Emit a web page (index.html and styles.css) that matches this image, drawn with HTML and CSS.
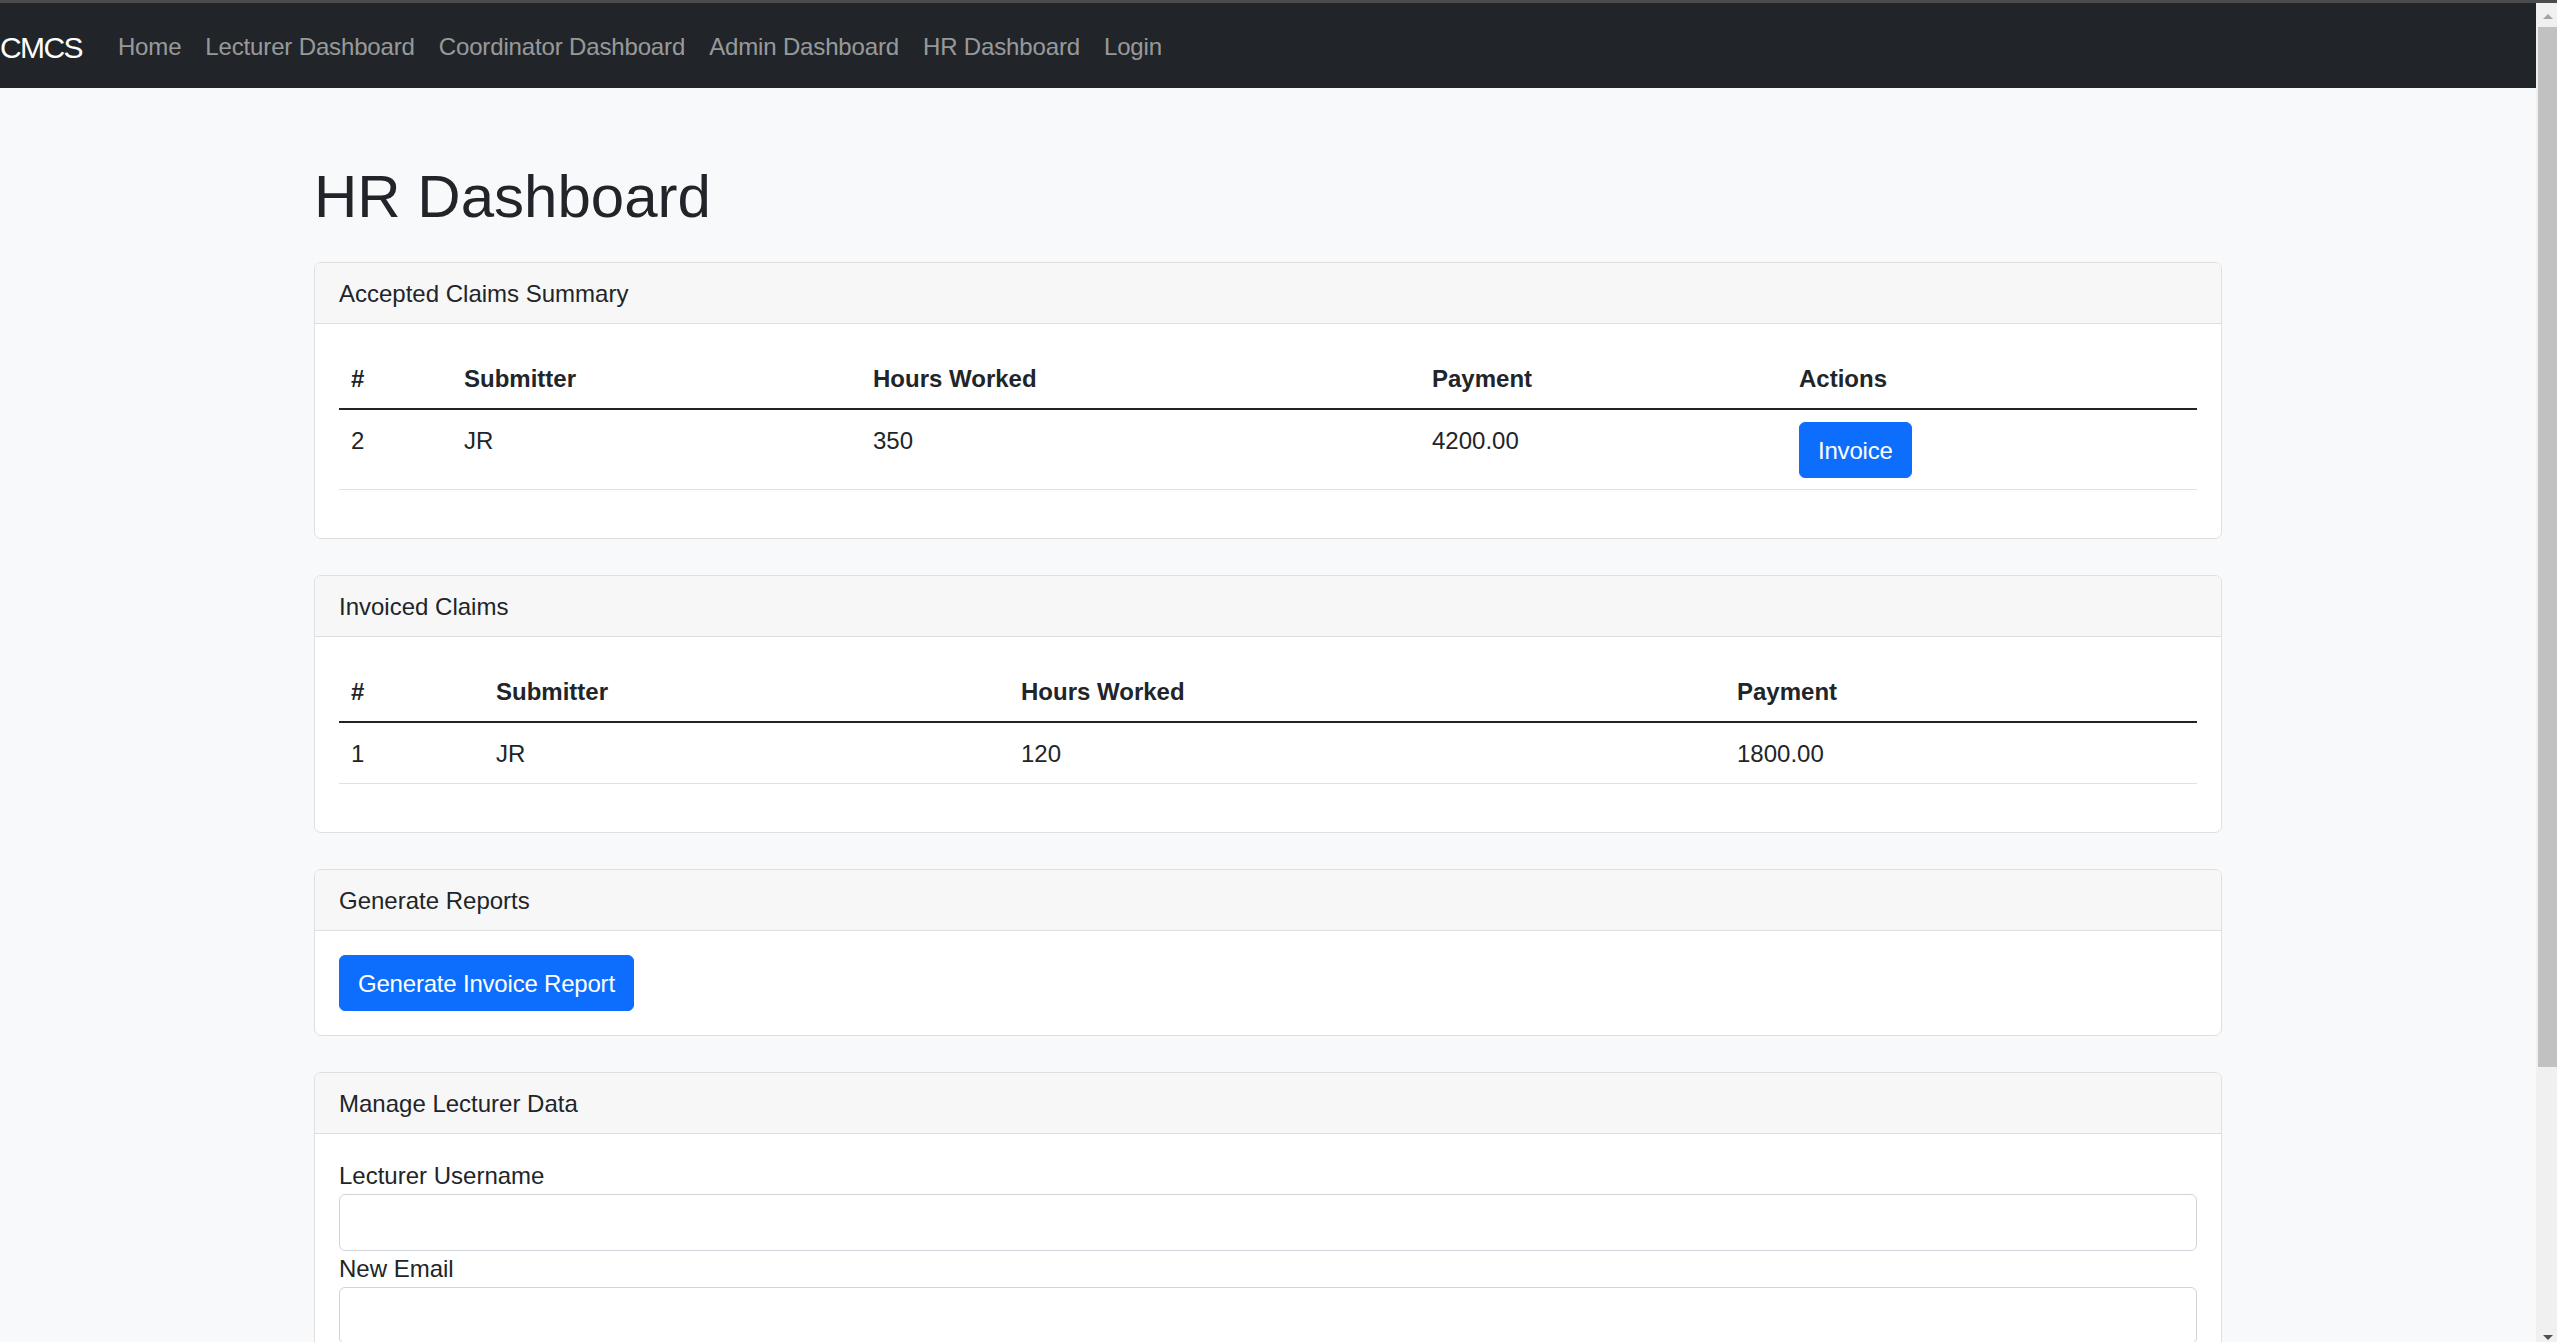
FILE: index.html
```html
<!DOCTYPE html>
<html lang="en">
<head>
<meta charset="utf-8">
<title>HR Dashboard - CMCS</title>
<link rel="stylesheet" href="styles.css">
</head>
<body>
<div class="topline"></div>
<div class="viewport">
  <div class="page">
    <nav class="navbar">
      <a class="brand" href="#">CMCS</a>
      <ul class="nav">
        <li><a class="nav-link" href="#">Home</a></li>
        <li><a class="nav-link" href="#">Lecturer Dashboard</a></li>
        <li><a class="nav-link" href="#">Coordinator Dashboard</a></li>
        <li><a class="nav-link" href="#">Admin Dashboard</a></li>
        <li><a class="nav-link" href="#">HR Dashboard</a></li>
        <li><a class="nav-link" href="#">Login</a></li>
      </ul>
    </nav>
    <main class="container">
      <h1 class="title">HR Dashboard</h1>

      <section class="card">
        <div class="card-header">Accepted Claims Summary</div>
        <div class="card-body">
          <table class="table t-accepted">
            <thead>
              <tr><th class="c1">#</th><th class="c2">Submitter</th><th class="c3">Hours Worked</th><th class="c4">Payment</th><th class="c5">Actions</th></tr>
            </thead>
            <tbody>
              <tr><td>2</td><td>JR</td><td>350</td><td>4200.00</td><td class="cell-btn"><button class="btn">Invoice</button></td></tr>
            </tbody>
          </table>
        </div>
      </section>

      <section class="card">
        <div class="card-header">Invoiced Claims</div>
        <div class="card-body">
          <table class="table t-invoiced">
            <thead>
              <tr><th class="c1">#</th><th class="c2">Submitter</th><th class="c3">Hours Worked</th><th class="c4">Payment</th></tr>
            </thead>
            <tbody>
              <tr><td>1</td><td>JR</td><td>120</td><td>1800.00</td></tr>
            </tbody>
          </table>
        </div>
      </section>

      <section class="card">
        <div class="card-header">Generate Reports</div>
        <div class="card-body">
          <button class="btn">Generate Invoice Report</button>
        </div>
      </section>

      <section class="card">
        <div class="card-header">Manage Lecturer Data</div>
        <div class="card-body">
          <form class="form">
            <label class="form-label" for="lu">Lecturer Username</label>
            <input class="form-control" id="lu" type="text">
            <label class="form-label" for="ne">New Email</label>
            <input class="form-control" id="ne" type="email">
          </form>
        </div>
      </section>
    </main>
  </div>
  <div class="scrollbar">
    <div class="sb-up"></div>
    <div class="sb-thumb"></div>
    <div class="sb-space"></div>
    <div class="sb-down"></div>
  </div>
</div>
</body>
</html>
```

FILE: styles.css
```css
* { box-sizing: border-box; }

html, body {
  margin: 0;
  height: 1342px;
  overflow: hidden;
}

body {
  display: flex;
  flex-direction: column;
  font-family: "Liberation Sans", Arial, sans-serif;
  font-size: 24px;
  line-height: 36px;
  color: #212529;
  background: #f8f9fa;
}

.topline {
  height: 3px;
  background: #4b4b4b;
  flex: none;
}

.viewport {
  flex: 1;
  display: flex;
  min-height: 0;
}

.page {
  flex: 1;
  min-width: 0;
  overflow: hidden;
  background: #f8f9fa;
}

/* navbar */
.navbar {
  display: flex;
  align-items: center;
  height: 85px;
  padding: 3px 0 0;
  background: #212529;
}

.brand {
  font-size: 30px;
  line-height: 45px;
  padding: 7px 0;
  margin-right: 24px;
  letter-spacing: -1.6px;
  color: #fff;
  text-decoration: none;
}

.nav {
  display: flex;
  list-style: none;
  margin: 0;
  padding: 0;
}

.nav-link {
  display: block;
  padding: 12px;
  letter-spacing: -0.15px;
  color: rgba(255, 255, 255, 0.55);
  text-decoration: none;
}

/* main */
.container {
  width: 1908px;
  margin: 0 auto;
  padding-top: 73px;
}

.title {
  margin: 0 0 29px;
  font-size: 60px;
  line-height: 72px;
  font-weight: 500;
}

.card {
  background: #fff;
  border: 1px solid #dfdfdf;
  border-radius: 7px;
  margin-bottom: 36px;
  overflow: hidden;
}

.card-header {
  padding: 13px 24px 11px;
  background: #f7f7f7;
  border-bottom: 1px solid #dfdfdf;
}

.card-body {
  padding: 24px;
}

/* tables */
.table {
  width: 100%;
  border-collapse: collapse;
  table-layout: fixed;
  margin-bottom: 24px;
  vertical-align: top;
}

.table th {
  text-align: left;
  font-weight: 700;
  padding: 13px 12px 11px;
  border-bottom: 2px solid #212529;
}

.table td {
  padding: 13px 12px 11px;
  border-bottom: 1px solid #dee2e6;
  vertical-align: top;
}

.table td.cell-btn {
  padding-top: 12px;
}

.t-accepted .c1 { width: 113px; }
.t-accepted .c2 { width: 409px; }
.t-accepted .c3 { width: 559px; }
.t-accepted .c4 { width: 367px; }

.t-invoiced .c1 { width: 145px; }
.t-invoiced .c2 { width: 525px; }
.t-invoiced .c3 { width: 716px; }

/* buttons */
.btn {
  display: inline-block;
  font-family: inherit;
  font-size: 24px;
  line-height: 36px;
  padding: 10px 18px 8px;
  letter-spacing: -0.2px;
  color: #fff;
  background: #0d6efd;
  border: 1px solid #0d6efd;
  border-radius: 6px;
  cursor: pointer;
}

/* form */
.form {
  display: flex;
  flex-direction: column;
}

.form-label {
  display: block;
  line-height: 36px;
}

.form-control {
  display: block;
  width: 100%;
  height: 57px;
  padding: 9px 18px;
  font-family: inherit;
  font-size: 24px;
  color: #212529;
  background: #fff;
  border: 1px solid #ced4da;
  border-radius: 6px;
}

/* fake browser scrollbar */
.scrollbar {
  width: 21px;
  flex: none;
  display: flex;
  flex-direction: column;
  align-items: flex-end;
  background: #f0f0f0;
}

.sb-up {
  width: 0;
  height: 0;
  margin: 11px 4px 0 0;
  border-left: 5px solid transparent;
  border-right: 5px solid transparent;
  border-bottom: 5px solid #a3a3a3;
}

.sb-thumb {
  width: 19px;
  height: 1040px;
  margin-top: 8px;
  background: #c1c1c1;
}

.sb-space {
  flex: 1;
}

.sb-down {
  width: 0;
  height: 0;
  margin: 0 4px 2px 0;
  border-left: 5px solid transparent;
  border-right: 5px solid transparent;
  border-top: 5px solid #505050;
}
```
